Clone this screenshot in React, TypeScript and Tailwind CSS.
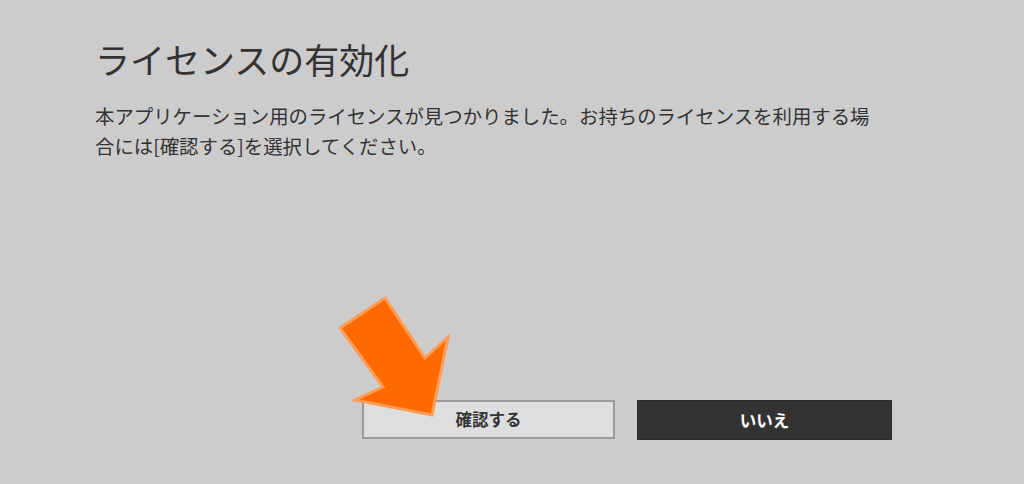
import React from 'react';

const FONT = '"Noto Sans CJK JP", "Noto Sans", sans-serif';

const Arrow: React.FC = () => (
  <svg className="absolute left-0 top-0 pointer-events-none" width="1024" height="484">
    <polygon
      points="340,328 385,298 425,358 448,337 432,415 355,400 383,387"
      fill="#ff6a00"
      stroke="#ff9c55"
      strokeWidth="3"
      strokeLinejoin="miter"
    />
  </svg>
);

const App: React.FC = () => {
  return (
    <div
      className="relative w-[1024px] h-[484px] bg-[#cccccc] flex flex-col overflow-hidden"
      style={{ fontFamily: FONT }}
    >
      {/* Header + message */}
      <div className="pl-[95px] pt-[35px]">
        <h1 className="text-[35px] leading-[48px] text-[#333333]">
          ライセンスの有効化
        </h1>
        <p className="mt-[18px] w-[785px] text-[19.4px] leading-[30px] text-[#333333]">
          本アプリケーション用のライセンスが見つかりました。お持ちのライセンスを利用する場合には[確認する]を選択してください。
        </p>
      </div>

      {/* Buttons */}
      <div className="mt-auto flex gap-[22px] pl-[362px] pb-[44px]">
        <button className="w-[253px] h-[39px] bg-[#dedede] border-2 border-[#9a9a9a] text-[16.5px] font-bold text-[#333333]">
          確認する
        </button>
        <button className="w-[255px] h-[40px] bg-[#333333] border border-[#2a2a2a] text-[16.5px] font-bold text-white">
          いいえ
        </button>
      </div>

      <Arrow />
    </div>
  );
};

export default App;
